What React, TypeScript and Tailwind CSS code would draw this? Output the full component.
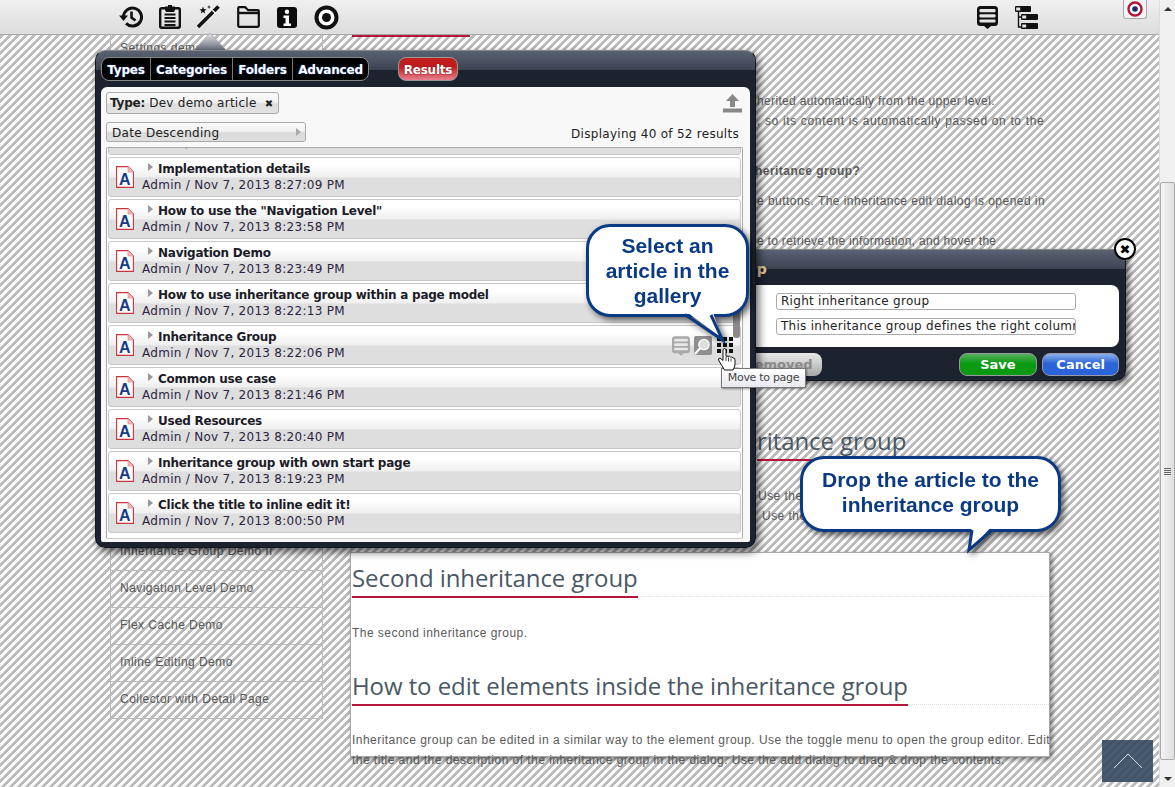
import React from "react";

function History() {
  return (
    <svg width="24" height="24" viewBox="0 0 24 24" fill="none" stroke="#111" strokeWidth="3">
      <path d="M4.5 12a9 9 0 1 1 2.6 6.4" />
      <path d="M0 10.5h9L4.5 16z" fill="#111" stroke="none" />
      <path d="M12.5 6.5v6l4 3" strokeWidth="2.6" />
    </svg>
  );
}
function Clipboard() {
  return (
    <svg width="22" height="24" viewBox="0 0 22 24" fill="none">
      <rect x="1.2" y="3.2" width="19.6" height="19.6" rx="1.5" stroke="#111" strokeWidth="2.4" />
      <path d="M6 5V1.5h3V0h4v1.5h3V5L15 7H7z" fill="#111" />
      <path d="M5.5 9.5h11M5.5 13h11M5.5 16.5h11M5.5 20h11" stroke="#111" strokeWidth="1.8" />
    </svg>
  );
}
function Wand() {
  return (
    <svg width="24" height="24" viewBox="0 0 24 24" fill="none">
      <path d="M1 22L16.5 6.5" stroke="#111" strokeWidth="3.4" />
      <path d="M17 6L21.5 1.5" stroke="#111" strokeWidth="3.8" />
      <path d="M15.3 5.3l3.4 3.4" stroke="#fff" strokeWidth="1.2" />
      <path d="M6 1.5l.9 2.6 2.6.3-2 1.6.7 2.6L6 7.1 3.8 8.6l.7-2.6-2-1.6 2.6-.3z" fill="#111" />
      <path d="M12 0l.5 1.5 1.5.5-1.5.5-.5 1.5-.5-1.5L10 2l1.5-.5z" fill="#111" />
    </svg>
  );
}
function Folder() {
  return (
    <svg width="23" height="22" viewBox="0 0 23 22" fill="none">
      <path d="M1.2 4V2.2Q1.2 1.2 2.2 1.2h6l3 3h9.600q1 0 1 1v14.600q0 1-1 1H2.200q-1 0-1-1z" stroke="#111" strokeWidth="2.2" />
      <path d="M1 7h21" stroke="#111" strokeWidth="2.4" />
    </svg>
  );
}
function Info() {
  return (
    <svg width="20" height="21" viewBox="0 0 20 21">
      <rect width="20" height="21" rx="3" fill="#0c0c0c" />
      <circle cx="10" cy="4.800" r="2.200" fill="#fff" />
      <path d="M6.500 8.500h5.500v8h2V19H6.500v-2.500h2V11h-2z" fill="#fff" />
    </svg>
  );
}
function Target() {
  return (
    <svg width="25" height="25" viewBox="0 0 25 25">
      <circle cx="12.500" cy="12.500" r="10" fill="#fff" stroke="#111" strokeWidth="4" />
      <circle cx="12.500" cy="12.500" r="4.500" fill="#111" />
    </svg>
  );
}
function Stack({ fg = "#111", w = 21, h = 23, bar = "#e4e4e4" }: { fg?: string; w?: number; h?: number; bar?: string }) {
  return (
    <svg width={w} height={h} viewBox="0 0 21 23">
      <rect width="21" height="20" rx="3.500" fill={fg} />
      <path d="M7 20h7l-3.500 3z" fill={fg} />
      <rect x="2.500" y="3" width="16" height="3.200" rx="1" fill={bar} />
      <rect x="2.500" y="8.200" width="16" height="3.200" rx="1" fill={bar} />
      <rect x="2.500" y="13.400" width="16" height="3.200" rx="1" fill={bar} />
    </svg>
  );
}
function Tree() {
  return (
    <svg width="23" height="23" viewBox="0 0 23 23">
      <path d="M3.500 6v15h3M3.500 11h3" stroke="#111" strokeWidth="1.400" fill="none" />
      <rect x="0" y="0" width="16" height="6" rx="1" fill="#111" />
      <rect x="1.200" y="1.500" width="4" height="3" fill="#e4e4e4" />
      <rect x="6" y="8" width="17" height="6" rx="1" fill="#111" />
      <rect x="7.200" y="9.500" width="4" height="3" fill="#e4e4e4" />
      <rect x="6" y="17" width="17" height="6" rx="1" fill="#111" />
      <rect x="7.200" y="18.500" width="4" height="3" fill="#e4e4e4" />
    </svg>
  );
}
function DocA() {
  return (
    <svg width="18" height="22" viewBox="0 0 18 22" className="shrink-0">
      <path d="M.6 .6h11.400l5.400 5.400v15.400h-16.800z" fill="#fff" stroke="#c9333a" strokeWidth="1.100" />
      <path d="M12 .6v5.400h5.400" fill="#f2b9b9" stroke="#e09090" strokeWidth=".8" />
      <text x="9" y="19" textAnchor="middle" fontFamily="Liberation Sans, sans-serif" fontWeight="700" fontSize="16" fill="#133b87">A</text>
    </svg>
  );
}

function Row({ title, time, tools }: { title: string; time: string; tools?: boolean }) {
  return (
    <div className="relative h-[40px] shrink-0 rounded-[3px] border border-[#c8c8c8] bg-[linear-gradient(#ffffff_0,#ffffff_7px,#efefef_19px,#dedede_20px,#dedede_100%)] pl-[7px] flex items-center">
      <DocA />
      <div className="ml-[8px] -mt-[1px]">
        <div className="flex items-center h-[16px]">
          <span className="w-0 h-0 ml-[6px] border-y-[4px] border-y-transparent border-l-[5px] border-l-[#999] -mt-[3px]" />
          <span className="ml-[5px] font-bold text-[#1c1c28] tracking-[-0.25px]">{title}</span>
        </div>
        <div className="h-[16px] leading-[16px] text-[#2c2440]">{time}</div>
      </div>
      {tools && (
        <div className="absolute right-[6px] top-[10px] flex items-start gap-[4px]">
          <Stack fg="#a9a9a9" w={18} h={20} bar="#e8e8e8" />
          <svg width="18" height="19" viewBox="0 0 19 20">
            <rect width="19" height="20" rx="2" fill="#8e8e8e" />
            <circle cx="10.500" cy="9" r="5.500" fill="#dedede" stroke="#fff" strokeWidth="1.200" />
            <path d="M6.500 13L1 19" stroke="#fff" strokeWidth="2.400" />
          </svg>
          <svg width="18" height="18" viewBox="0 0 18 18" fill="#111">
            <rect x="1" y="1" width="4" height="4" /><rect x="7" y="1" width="4" height="4" /><rect x="13" y="1" width="4" height="4" />
            <rect x="1" y="7" width="4" height="4" /><rect x="7" y="7" width="4" height="4" /><rect x="13" y="7" width="4" height="4" />
            <rect x="1" y="13" width="4" height="4" /><rect x="7" y="13" width="4" height="4" /><rect x="13" y="13" width="4" height="4" />
          </svg>
        </div>
      )}
    </div>
  );
}

const rows = [
  ["Implementation details", "Admin / Nov 7, 2013 8:27:09 PM"],
  ['How to use the "Navigation Level"', "Admin / Nov 7, 2013 8:23:58 PM"],
  ["Navigation Demo", "Admin / Nov 7, 2013 8:23:49 PM"],
  ["How to use inheritance group within a page model", "Admin / Nov 7, 2013 8:22:13 PM"],
  ["Inheritance Group", "Admin / Nov 7, 2013 8:22:06 PM"],
  ["Common use case", "Admin / Nov 7, 2013 8:21:46 PM"],
  ["Used Resources", "Admin / Nov 7, 2013 8:20:40 PM"],
  ["Inheritance group with own start page", "Admin / Nov 7, 2013 8:19:23 PM"],
  ["Click the title to inline edit it!", "Admin / Nov 7, 2013 8:00:50 PM"],
];

const tabCls = "flex items-center justify-center h-full pt-[2px] border-r border-[#777] last:border-r-0 text-white font-bold tracking-[-0.2px] [text-shadow:0_0_2px_#2a55c0]";
const headerBg = "bg-[linear-gradient(#5a6172_0,#3c4353_19px,#1c222e_19px,#1c222e_100%)]";

function Gallery() {
  return (
    <div className={`absolute z-20 left-[95px] top-[50px] w-[661px] h-[498px] rounded-[10px] border border-[#12161d] border-t-[#888] ${headerBg} shadow-[3px_4px_8px_rgba(0,0,0,0.6)] font-['DejaVu_Sans',sans-serif] text-[12px] tracking-[0.28px] px-[5px] pb-[5px] flex flex-col`}>
      <div className="h-[36px] shrink-0 flex items-start pt-[6px]">
        <div className="flex h-[24px] rounded-[8px] border border-[#888] bg-black overflow-hidden">
          <span className={`${tabCls} w-[49px]`}>Types</span>
          <span className={`${tabCls} w-[82px]`}>Categories</span>
          <span className={`${tabCls} w-[60px]`}>Folders</span>
          <span className={`${tabCls} w-[75px]`}>Advanced</span>
        </div>
        <div className="ml-[29px] w-[60px] h-[24px] pt-[2px] rounded-[8px] border border-[#999] bg-[linear-gradient(#c21d1d_0,#c21d1d_40%,#e88090_100%)] text-white font-bold tracking-[-0.2px] flex items-center justify-center [text-shadow:0_0_2px_#7a1010]">Results</div>
      </div>
      <div className="flex-1 rounded-t-[6px] rounded-b-[2px] bg-[#f8f8f8] px-[5px] pt-[5px] pb-[3px] flex flex-col min-h-0 text-[#222]">
        <div className="flex justify-between items-start h-[22px] shrink-0">
          <div className="w-[173px] h-[22px] rounded-[3px] border border-[#aaa] bg-[linear-gradient(#fafafa_0,#f2f2f2_45%,#dedede_55%,#e2e2e2_100%)] flex items-center pl-[3px] text-[12px]">
            <b className="tracking-[-0.2px]">Type:</b>
            <span className="ml-[4px]">Dev demo article</span>
            <span className="ml-[8px] text-[10px] font-bold">✖</span>
          </div>
          <svg width="19" height="19" viewBox="0 0 19 19" className="mr-[3px] mt-[2px]" fill="#888">
            <path d="M9.500 0l6.500 7h-4v6H7V7H3z" />
            <rect x="0" y="14.500" width="19" height="4" />
          </svg>
        </div>
        <div className="mt-[8px] flex justify-between items-end h-[20px] shrink-0">
          <div className="w-[200px] h-[20px] rounded-[3px] border border-[#aaa] bg-[linear-gradient(#fafafa_0,#f2f2f2_45%,#dadada_55%,#e0e0e0_100%)] flex items-center justify-between pl-[5px] pr-[4px]">
            <span className="mt-[2px]">Date Descending</span>
            <span className="w-0 h-0 border-y-[4px] border-y-transparent border-l-[5px] border-l-[#aaa]" />
          </div>
          <span className="mr-[6px] -mb-[1px]">Displaying 40 of 52 results</span>
        </div>
        <div className="mt-[5px] flex-1 min-h-0 w-[637px] rounded-[2px] border border-[#aaa] border-b-[#ccc] overflow-hidden px-[1px] relative bg-white">
          <div className="flex flex-col gap-[2px] -mt-[33px]">
            <Row title="Settings" time="Admin / Nov 7, 2013 8:28:00 PM" />
            {rows.map((r, i) => (
              <Row key={r[0]} title={r[0]} time={r[1]} tools={i === 4} />
            ))}
          </div>
          <div className="absolute right-[2px] top-[120px] w-[7px] h-[70px] rounded-[3px] bg-[#8a8a8a]" />
        </div>
      </div>
    </div>
  );
}

function Arrow() {
  return (
    <svg className="absolute z-20 left-[192px] top-[32px]" width="36" height="19" viewBox="0 0 36 19">
      <defs>
        <linearGradient id="ag" x1="0" x2="0" y1="0" y2="1">
          <stop offset="0" stopColor="#e8e8e8" />
          <stop offset="1" stopColor="#5e6575" />
        </linearGradient>
      </defs>
      <path d="M1 19L18 1l17 18z" fill="url(#ag)" stroke="#aaa" strokeWidth=".8" />
    </svg>
  );
}

function EditDialog() {
  return (
    <div className={`absolute z-10 left-[640px] top-[249px] w-[486px] h-[132px] rounded-[10px] border border-[#12161d] border-t-[#888] ${headerBg} shadow-[3px_3px_6px_rgba(0,0,0,0.6)] font-['DejaVu_Sans',sans-serif] text-[12px] tracking-[0.28px] flex flex-col px-[6px]`}>
      <div className="h-[35px] shrink-0 flex items-center justify-end pr-[352px] pt-[3px] font-bold text-[14px] whitespace-nowrap text-[#e6c8a0]">Edit inheritance group</div>
      <div className="h-[62px] shrink-0 rounded-[8px] bg-white pl-[129px] pt-[8px] text-[#222] flex flex-col gap-[8px]">
        <div className="w-[300px] h-[17px] rounded-[3px] border border-[#aaa] pl-[4px] leading-[15px] overflow-hidden whitespace-nowrap">Right inheritance group</div>
        <div className="w-[300px] h-[17px] rounded-[3px] border border-[#aaa] pl-[4px] leading-[15px] overflow-hidden whitespace-nowrap">This inheritance group defines the right column of the page</div>
      </div>
      <div className="mt-[6px] flex items-center h-[23px] font-bold tracking-normal">
        <div className="ml-[54px] w-[121px] h-[23px] rounded-[8px] bg-[linear-gradient(#e8e8e8_0,#d0d0d0_40%,#a8a8a8_100%)] text-[#8a8a8a] flex items-center justify-end pr-[9px] text-[13px]">Removed</div>
        <div className="ml-[137px] w-[79px] h-[23px] rounded-[8px] border border-[#999] bg-[linear-gradient(#58b060_0,#0a9a12_45%,#0a9a12_100%)] text-white flex items-center justify-center text-[13px]">Save</div>
        <div className="ml-[5px] w-[77px] h-[23px] rounded-[8px] border border-[#99a] bg-[linear-gradient(#8ab0e8_0,#2a64d8_45%,#2a64d8_100%)] text-white flex items-center justify-center text-[13px]">Cancel</div>
      </div>
      <div className="absolute -right-[11px] -top-[12px] w-[22px] h-[22px] rounded-full bg-white border-[2px] border-black flex items-center justify-center text-[13px] leading-none text-black font-bold">✖</div>
    </div>
  );
}

function Callouts() {
  const bubble = "absolute inset-0 rounded-[24px] border-[3px] border-[#0b3a85] bg-white flex items-center justify-center text-center font-bold text-[#0b3a85] font-['Liberation_Sans',sans-serif] text-[21px] leading-[25px]";
  return (
    <>
      <div className="absolute z-30 left-[586px] top-[224px] w-[163px] h-[93px] [filter:drop-shadow(3px_3px_3px_rgba(0,0,0,0.6))]">
        <div className={bubble}>
          <span>Select an<br />article in the<br />gallery</span>
        </div>
        <svg className="absolute left-[90px] top-[86px]" width="56" height="34" viewBox="0 0 56 34">
          <path d="M8 0L46 28 36 0z" fill="#fff" />
          <path d="M9 4.500L46.500 30 35 5" fill="none" stroke="#0b3a85" strokeWidth="3" />
        </svg>
      </div>
      <div className="absolute z-30 left-[800px] top-[456px] w-[261px] h-[76px] [filter:drop-shadow(3px_3px_3px_rgba(0,0,0,0.6))]">
        <div className={`${bubble} pb-[5px]`}>
          <span>Drop the article to the<br />inheritance group</span>
        </div>
        <svg className="absolute left-[164px] top-[68px]" width="36" height="30" viewBox="0 0 36 30">
          <path d="M8 0L5 27 30 0z" fill="#fff" />
          <path d="M8 6L5 26 28 6" fill="none" stroke="#0b3a85" strokeWidth="3" />
        </svg>
      </div>
    </>
  );
}

function Tooltip() {
  return (
    <>
      <div className="absolute z-30 left-[721px] top-[368px] w-[85px] h-[20px] border border-[#777] bg-[linear-gradient(#ffffff,#e8e8f0)] shadow-[1px_1px_2px_rgba(0,0,0,0.4)] text-[11px] text-[#444] flex items-center justify-center font-['DejaVu_Sans',sans-serif] tracking-[-0.3px]">Move to page</div>
      <svg className="absolute z-40 left-[717px] top-[347px]" width="20" height="24" viewBox="0 0 20 24">
        <path d="M6 2.500q1.500-2 3 0v7q1-1 2 0 1.500-1 2.500.5 1.500-.5 2.500 1 2-.5 2 2v4q0 3-2 6H7.500L2 14q-1.500-3 1-3l3 2.500z" fill="#fff" stroke="#111" strokeWidth="1" />
        <path d="M9 10v4M11.500 10.500v4M14 11.500v3" stroke="#111" strokeWidth=".8" />
      </svg>
    </>
  );
}

function Scrollbar() {
  return (
    <div className="w-[16px] shrink-0 h-full bg-[#f0f0f0] border-l border-[#ddd] flex flex-col items-center">
      <div className="h-[17px] flex items-center justify-center shrink-0">
        <span className="w-0 h-0 border-x-[4px] border-x-transparent border-b-[4px] border-b-[#333]" />
      </div>
      <div className="h-[165px] shrink-0" />
      <div className="w-[15px] h-[578px] shrink-0 rounded-[2px] border border-[#aaa] bg-[linear-gradient(90deg,#f4f4f4,#dedede)] flex flex-col items-center justify-center gap-[1px]">
        <span className="w-[7px] h-[1px] bg-[#666]" />
        <span className="w-[7px] h-[1px] bg-[#666]" />
        <span className="w-[7px] h-[1px] bg-[#666]" />
        <span className="w-[7px] h-[1px] bg-[#666]" />
      </div>
      <div className="flex-1" />
      <div className="h-[17px] flex items-center justify-center shrink-0">
        <span className="w-0 h-0 border-x-[4px] border-x-transparent border-t-[4px] border-t-[#333]" />
      </div>
    </div>
  );
}

export default function App() {
  const sideCls = "h-[37px] flex items-center pl-[9px] pb-[2px] border-b border-[#bbb]";
  const h2Cls = "h-[37px] font-['Open_Sans',sans-serif] text-[24px] leading-[36px] tracking-[-0.08px] text-[#4a5764] border-b border-dotted border-[#ddd]";
  return (
    <div className="relative w-[1175px] h-[787px] overflow-hidden flex bg-white font-['Liberation_Sans',sans-serif]">
      <div className="flex-1 min-w-0 flex flex-col">
        <header className="h-[35px] shrink-0 border-b border-[#aaa] bg-[linear-gradient(#f0f0f0,#dcdcdc)] relative flex items-center pl-[119px] pr-[121px]">
          <div className="flex items-center">
            <span className="w-[40px] flex"><History /></span>
            <span className="w-[38px] flex"><Clipboard /></span>
            <span className="w-[40px] flex"><Wand /></span>
            <span className="w-[40px] flex"><Folder /></span>
            <span className="w-[37px] flex"><Info /></span>
            <span className="w-[25px] flex"><Target /></span>
          </div>
          <div className="ml-auto flex items-center gap-[17px]">
            <Stack />
            <Tree />
          </div>
          <div className="absolute left-[1123px] top-0 w-[24px] h-[19px] rounded-b-[3px] border border-t-0 border-[#aaa] bg-[#f4f4f4] flex items-center justify-center">
            <svg width="16" height="16" viewBox="0 0 16 16">
              <circle cx="8" cy="8" r="6.500" fill="#fff" stroke="#b5173a" strokeWidth="2.400" />
              <circle cx="8" cy="8" r="2.800" fill="#1b2a70" />
            </svg>
          </div>
        </header>

        <div className="flex-1 min-h-0 flex pl-[110px] bg-[repeating-linear-gradient(135deg,#bcbcbc_0,#bcbcbc_2.83px,#ffffff_2.83px,#ffffff_5.66px)] text-[12px] text-[#5a5a5a] tracking-[0.46px]">
          <aside className="w-[213px] shrink-0 border-x border-[#bbb] h-[684px] flex flex-col">
            <div className="h-[26px] flex items-center pl-[9px]">Settings demo</div>
            <div className="h-[473px]" />
            <div className={sideCls}>Inheritance Group Demo II</div>
            <div className={sideCls}>Navigation Level Demo</div>
            <div className={sideCls}>Flex Cache Demo</div>
            <div className={sideCls}>Inline Editing Demo</div>
            <div className={sideCls}>Collector with Detail Page</div>
          </aside>

          <main className="ml-[27px] w-[700px] shrink-0 flex flex-col leading-[20px]">
            <div className="ml-[2px] w-[118px] h-[2px] bg-[#b5173a]" />
            <div className="pl-[407px] mt-[54px] whitespace-nowrap">
              <div className="tracking-[0.35px]">herited automatically from the upper level.</div>
              <div className="tracking-[0.65px]">, so its content is automatically passed on to the</div>
              <div className="mt-[30px] -ml-[2px] font-bold">heritance group?</div>
              <div className="mt-[10px]">e buttons. The inheritance edit dialog is opened in</div>
              <div className="mt-[20px] tracking-[0.3px]">e to retrieve the information, and hover the</div>
            </div>
            <h2 className={`mt-[172px] pl-[407px] ${h2Cls}`}>
              <span className="inline-block h-[38px] border-b-2 border-[#b5173a] whitespace-nowrap">ritance group</span>
            </h2>
            <div className="pl-[408px] mt-[26px] whitespace-nowrap">Use the</div>
            <div className="pl-[412px] whitespace-nowrap">Use the</div>

            <section className="mt-[26px] h-[205px] shrink-0 bg-white border border-[#aaa] shadow-[2px_2px_5px_rgba(0,0,0,0.5)] pt-[7px] whitespace-nowrap">
              <h2 className={`pl-[1px] ${h2Cls}`}>
                <span className="inline-block h-[38px] border-b-2 border-[#b5173a]">Second inheritance group</span>
              </h2>
              <p className="mt-[26px] pl-[1px]">The second inheritance group.</p>
              <h2 className={`mt-[25px] pl-[1px] ${h2Cls}`}>
                <span className="inline-block h-[38px] border-b-2 border-[#b5173a]">How to edit elements inside the inheritance group</span>
              </h2>
              <p className="mt-[25px] pl-[1px]">Inheritance group can be edited in a similar way to the element group. Use the toggle menu to open the group editor. Edit</p>
              <p className="pl-[1px]">the title and the description of the inheritance group in the  dialog. Use the add dialog to drag &amp; drop the contents.</p>
            </section>
          </main>
        </div>
      </div>
      <Scrollbar />

      <Arrow />
      <EditDialog />
      <Gallery />
      <Callouts />
      <Tooltip />
      <div className="absolute z-10 left-[1102px] top-[740px] w-[51px] h-[42px] bg-[#35495e]/90 flex items-center justify-center">
        <svg width="30" height="18" viewBox="0 0 30 18" fill="none" stroke="#fff" strokeWidth=".8">
          <path d="M1 16L15 2l14 14" />
        </svg>
      </div>
    </div>
  );
}
